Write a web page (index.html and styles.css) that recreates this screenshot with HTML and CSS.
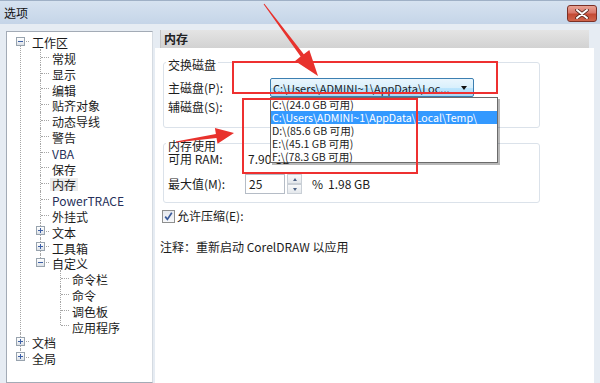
FILE: index.html
```html
<!DOCTYPE html>
<html lang="zh-CN">
<head>
<meta charset="utf-8">
<title>选项</title>
<link rel="stylesheet" href="styles.css">
</head>
<body>
<div class="window">
  <div class="titlebar">
    <span class="title">选项</span>
    <div class="close">
      <svg width="14" height="10" viewBox="0 0 14 10"><path d="M2 1 L12 9 M12 1 L2 9" stroke="#5a2a22" stroke-width="3.6" stroke-linecap="round"/><path d="M2 1 L12 9 M12 1 L2 9" stroke="#ffffff" stroke-width="2" stroke-linecap="round"/></svg>
    </div>
  </div>
  <div class="main">
    <div class="tree-panel">
      <ul class="tree">
        <li>
          <div class="row"><span class="tog minus"></span><span class="lbl">工作区</span></div>
          <ul>
            <li><div class="row"><span class="lbl">常规</span></div></li>
            <li><div class="row"><span class="lbl">显示</span></div></li>
            <li><div class="row"><span class="lbl">编辑</span></div></li>
            <li><div class="row"><span class="lbl">贴齐对象</span></div></li>
            <li><div class="row"><span class="lbl">动态导线</span></div></li>
            <li><div class="row"><span class="lbl">警告</span></div></li>
            <li><div class="row"><span class="lbl lat">VBA</span></div></li>
            <li><div class="row"><span class="lbl">保存</span></div></li>
            <li><div class="row"><span class="lbl sel">内存</span></div></li>
            <li><div class="row"><span class="lbl lat">PowerTRACE</span></div></li>
            <li><div class="row"><span class="lbl">外挂式</span></div></li>
            <li><div class="row"><span class="tog plus"></span><span class="lbl">文本</span></div></li>
            <li><div class="row"><span class="tog plus"></span><span class="lbl">工具箱</span></div></li>
            <li>
              <div class="row"><span class="tog minus"></span><span class="lbl">自定义</span></div>
              <ul>
                <li><div class="row"><span class="lbl">命令栏</span></div></li>
                <li><div class="row"><span class="lbl">命令</span></div></li>
                <li><div class="row"><span class="lbl">调色板</span></div></li>
                <li><div class="row"><span class="lbl">应用程序</span></div></li>
              </ul>
            </li>
          </ul>
        </li>
        <li><div class="row"><span class="tog plus"></span><span class="lbl">文档</span></div></li>
        <li><div class="row"><span class="tog plus"></span><span class="lbl">全局</span></div></li>
      </ul>
    </div>
    <div class="pane">
      <div class="pane-head">内存</div>
      <div class="pane-body">
        <div class="group g1">
          <div class="g-title">交换磁盘</div>
          <div class="frow r1">
            <span class="flabel w1">主磁盘(P):</span>
            <div class="combo">
              <span class="combo-text">C:\Users\ADMINI~1\AppData\Loc...</span>
              <span class="combo-arrow"></span>
              <ul class="droplist">
                <li>C:\(24.0 GB 可用)</li>
                <li class="hi">C:\Users\ADMINI~1\AppData\Local\Temp\</li>
                <li>D:\(85.6 GB 可用)</li>
                <li>E:\(45.1 GB 可用)</li>
                <li>F:\(78.3 GB 可用)</li>
              </ul>
            </div>
          </div>
          <div class="frow r2">
            <span class="flabel w1">辅磁盘(S):</span>
          </div>
        </div>
        <div class="group g2">
          <div class="g-title t2">内存使用</div>
          <div class="frow r3">
            <span class="flabel w2">可用 RAM:</span>
            <span class="ramval">7.90 GB</span>
          </div>
          <div class="frow r4">
            <span class="flabel w2">最大值(M):</span>
            <div class="numbox">25</div>
            <div class="spin">
              <div class="spin-btn"><span class="tri up"></span></div>
              <div class="spin-btn"><span class="tri down"></span></div>
            </div>
            <span class="pct">%</span>
            <span class="gb">1.98 GB</span>
          </div>
        </div>
        <div class="checkrow">
          <span class="cbox"><svg width="11" height="11" viewBox="0 0 11 11"><path d="M2.2 5.6 L4.4 8.4 L8.8 1.8" fill="none" stroke="#3a5a9a" stroke-width="1.7"/></svg></span>
          <span class="clabel">允许压缩(E):</span>
        </div>
        <div class="note">注释：重新启动 CorelDRAW 以应用</div>
      </div>
    </div>
  </div>
  <svg class="annot" width="600" height="383" viewBox="0 0 600 383">
    <rect x="233" y="62" width="264" height="31" fill="none" stroke="#ee3030" stroke-width="2"/>
    <rect x="243" y="99" width="174" height="74" fill="none" stroke="#ee3030" stroke-width="2"/>
    <polygon fill="#e8322d" points="264.4,3.7 303.8,54.2 309.3,49.9 318,76 295.1,60.9 300.6,56.6 263.6,4.3"/>
    <polygon fill="#e8322d" points="175.9,141.5 215.9,133.9 214.9,128 234,133 217.5,143.8 216.5,137.9 176.1,142.5"/>
  </svg>
</div>
</body>
</html>
```
FILE: styles.css
```css
* { box-sizing: border-box; }
html, body { margin: 0; padding: 0; }
body {
  width: 600px;
  height: 383px;
  overflow: hidden;
  font-family: "Noto Sans CJK SC", "Liberation Sans", sans-serif;
  font-size: 12px;
  color: #1c1c1c;
  background: #e6ecf3;
}
.window {
  position: relative;
  width: 600px;
  height: 383px;
  display: flex;
  flex-direction: column;
}
.titlebar {
  height: 24px;
  flex: none;
  display: flex;
  align-items: center;
  justify-content: space-between;
  padding: 0 3px 0 4px;
  background: linear-gradient(#d6e2f0, #c5d5e8);
  border-top: 1px solid #9fb0c6;
}
.title { line-height: 14px; color: #111; }
.close {
  width: 30px;
  height: 17px;
  margin-top: 2px;
  border: 1px solid #7b3026;
  border-radius: 3px;
  background: linear-gradient(#e9a393 0%, #d9776a 45%, #c44a34 55%, #d0654c 100%);
  display: flex;
  align-items: center;
  justify-content: center;
}
.main {
  flex: 1;
  display: flex;
  gap: 2px;
  padding: 6px 6px 0 6px;
}
/* tree */
.tree-panel {
  width: 147px;
  flex: none;
  margin-top: 1px;
  background: #fff;
  border: 1px solid #a3abb6;
  border-right-color: #d5dbe2;
  padding-top: 1px;
}
.tree, .tree ul { list-style: none; margin: 0; padding: 0; }
.tree ul { padding-left: 20px; }
.tree li { position: relative; }
.tree li::before {
  content: "";
  position: absolute;
  left: 13px;
  top: 0;
  bottom: 0;
  border-left: 1px dotted #a6a6a6;
}
.tree li:last-child::before { bottom: auto; height: 8px; }
.tree > li:first-child::before { top: 8px; }
.row {
  position: relative;
  height: 15.8px;
  line-height: 15.8px;
  padding-left: 24px;
  white-space: nowrap;
}
.row::before {
  content: "";
  position: absolute;
  left: 14px;
  top: 8px;
  width: 8px;
  border-top: 1px dotted #a6a6a6;
}
.lbl {
  display: inline-block;
  line-height: 13px;
  vertical-align: middle;
  padding: 0 2px;
  margin-left: -1px;
  color: #1a1a1a;
}
.lbl.lat { color: #27305a; }
.lbl.sel { background: #ececec; }
.tog {
  position: absolute;
  z-index: 1;
  left: 9px;
  top: 3.5px;
  width: 9px;
  height: 9px;
  border: 1px solid #98a3ae;
  background: linear-gradient(#ffffff, #dde2e8);
}
.tog::after {
  content: "";
  position: absolute;
  left: 1px;
  top: 3px;
  width: 5px;
  height: 1px;
  background: #3c5fa6;
}
.tog.plus::before {
  content: "";
  position: absolute;
  left: 3px;
  top: 1px;
  width: 1px;
  height: 5px;
  background: #3c5fa6;
}
/* right pane */
.pane {
  flex: 1;
  display: flex;
  flex-direction: column;
}
.pane-head {
  height: 18px;
  flex: none;
  margin: 0 5px;
  padding-left: 3px;
  line-height: 18px;
  font-weight: bold;
  color: #222;
  background: linear-gradient(#e4e4e4, #d2d2d2);
  border-left: 1px solid #c4c4c4;
}
.pane-body {
  flex: 1;
  background: #fff;
  padding-left: 8px;
}
.group {
  width: 377px;
  border: 1px solid #dbe2ea;
  border-radius: 3px;
  padding: 0 4px;
}
.g1 { margin-top: 14px; padding-bottom: 10px; }
.g2 { margin-top: 15px; padding-bottom: 8px; }
.g-title {
  width: fit-content;
  height: 14px;
  line-height: 14px;
  margin: -5px 0 0 -2px;
  padding: 0 2px;
  background: #fff;
}
.g-title.t2 { margin-bottom: -3px; }
.frow { display: flex; align-items: center; white-space: nowrap; }
.r1 { margin-top: 6px; height: 19px; }
.r2 { height: 20px; }
.r3 { height: 18px; }
.r4 { margin-top: 6px; height: 20px; }
.flabel { line-height: 14px; }
.w1 { width: 102px; }
.w2 { width: 77px; }
.combo {
  position: relative;
  width: 204px;
  height: 19px;
  border: 1px solid #3c7fb1;
  border-radius: 2px;
  background: linear-gradient(#eaf6fd 0%, #d9f0fc 50%, #bee6fd 51%, #a7d9f5 100%);
  display: flex;
  align-items: center;
  padding: 0 6px 0 2px;
  justify-content: space-between;
}
.combo-text { font-size: 11px; line-height: 14px; }
.combo-arrow {
  width: 0;
  height: 0;
  border-left: 3.5px solid transparent;
  border-right: 3.5px solid transparent;
  border-top: 4px solid #111;
}
.droplist {
  position: absolute;
  z-index: 5;
  top: 18px;
  left: -1px;
  width: 228px;
  height: 66px;
  margin: 0;
  padding: 0;
  list-style: none;
  background: #fff;
  border: 1px solid #6b6b6b;
  box-shadow: 2px 2px 0 rgba(0, 0, 0, 0.28);
}
.droplist li {
  height: 13px;
  line-height: 13px;
  font-size: 10.6px;
  padding-left: 1px;
  white-space: nowrap;
}
.droplist li.hi { background: #3399ff; color: #fff; }
.ramval { padding-left: 3px; line-height: 14px; }
.numbox {
  width: 40px;
  height: 20px;
  border: 1px solid #b5bcc6;
  padding-left: 3px;
  line-height: 18px;
}
.spin {
  margin-left: 2px;
  width: 15px;
  height: 20px;
  display: flex;
  flex-direction: column;
}
.spin-btn {
  flex: 1;
  border: 1px solid #c9cfd6;
  background: linear-gradient(#f8f9fa, #e4e8ec);
  display: flex;
  align-items: center;
  justify-content: center;
}
.tri {
  width: 0;
  height: 0;
  border-left: 2.5px solid transparent;
  border-right: 2.5px solid transparent;
}
.tri.up { border-bottom: 3px solid #4d6185; }
.tri.down { border-top: 3px solid #4d6185; }
.pct { margin-left: 10px; line-height: 14px; }
.gb { margin-left: 5px; line-height: 14px; }
.checkrow {
  margin-top: 4px;
  margin-left: -1px;
  height: 18px;
  display: flex;
  align-items: center;
}
.cbox {
  width: 13px;
  height: 13px;
  border: 1px solid #8e8f8f;
  background: linear-gradient(#e6e9ee, #f7f8fa);
  display: flex;
  align-items: center;
  justify-content: center;
}
.clabel { margin-left: 2px; line-height: 14px; }
.note {
  margin-top: 15px;
  margin-left: -3px;
  line-height: 14px;
}
.annot {
  position: absolute;
  left: 0;
  top: 0;
  pointer-events: none;
  z-index: 10;
}
```
